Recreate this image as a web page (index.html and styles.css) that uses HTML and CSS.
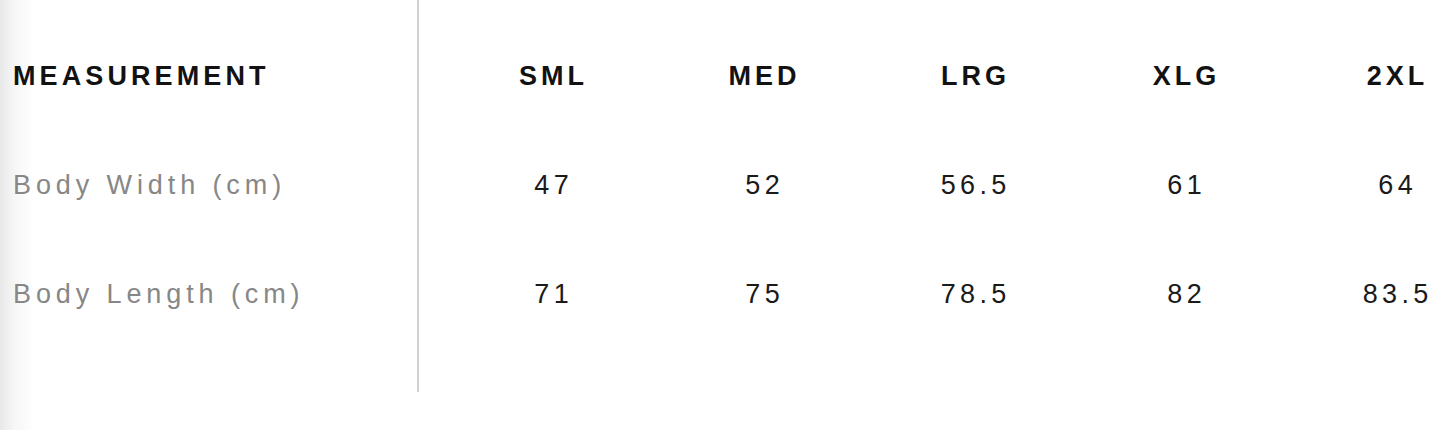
FILE: index.html
```html
<!DOCTYPE html>
<html lang="en">
<head>
<meta charset="utf-8">
<title>Size chart</title>
<link rel="stylesheet" href="styles.css">
</head>
<body>
<div class="chart">
  <div class="col labels">
    <div class="cell head">MEASUREMENT</div>
    <div class="cell label">Body Width (cm)</div>
    <div class="cell label">Body Length (cm)</div>
  </div>
  <div class="col size">
    <div class="cell head">SML</div>
    <div class="cell num">47</div>
    <div class="cell num">71</div>
  </div>
  <div class="col size">
    <div class="cell head">MED</div>
    <div class="cell num">52</div>
    <div class="cell num">75</div>
  </div>
  <div class="col size">
    <div class="cell head">LRG</div>
    <div class="cell num">56.5</div>
    <div class="cell num">78.5</div>
  </div>
  <div class="col size">
    <div class="cell head">XLG</div>
    <div class="cell num">61</div>
    <div class="cell num">82</div>
  </div>
  <div class="col size">
    <div class="cell head">2XL</div>
    <div class="cell num">64</div>
    <div class="cell num">83.5</div>
  </div>
</div>
</body>
</html>
```

FILE: styles.css
```css
html, body {
  margin: 0;
  padding: 0;
  height: 100%;
}
body {
  background: linear-gradient(to right, #e8e8e8 0px, #f6f6f6 14px, #ffffff 34px);
  font-family: "Liberation Sans", Arial, Helvetica, sans-serif;
  overflow: hidden;
}
.chart {
  display: flex;
  align-items: stretch;
  width: max-content;
}
.col {
  display: flex;
  flex-direction: column;
  padding: 22px 0 43px;
}
.labels {
  width: 419px;
  box-sizing: border-box;
  border-right: 2px solid #d2d2d2;
  padding-left: 13px;
}
.size {
  width: 211px;
  align-items: center;
}
.labels + .size {
  margin-left: 27px;
}
.cell {
  height: 109px;
  display: flex;
  align-items: center;
  font-size: 27px;
  white-space: nowrap;
}
.size .cell {
  justify-content: center;
}
.head {
  font-weight: 700;
  color: #121212;
  letter-spacing: 4.1px;
}
.label {
  color: #878787;
  letter-spacing: 4.9px;
}
.num {
  color: #1a1a1a;
  letter-spacing: 4.3px;
}
.size .head { padding-left: 4.1px; }
.size .num { padding-left: 4.3px; }
```
